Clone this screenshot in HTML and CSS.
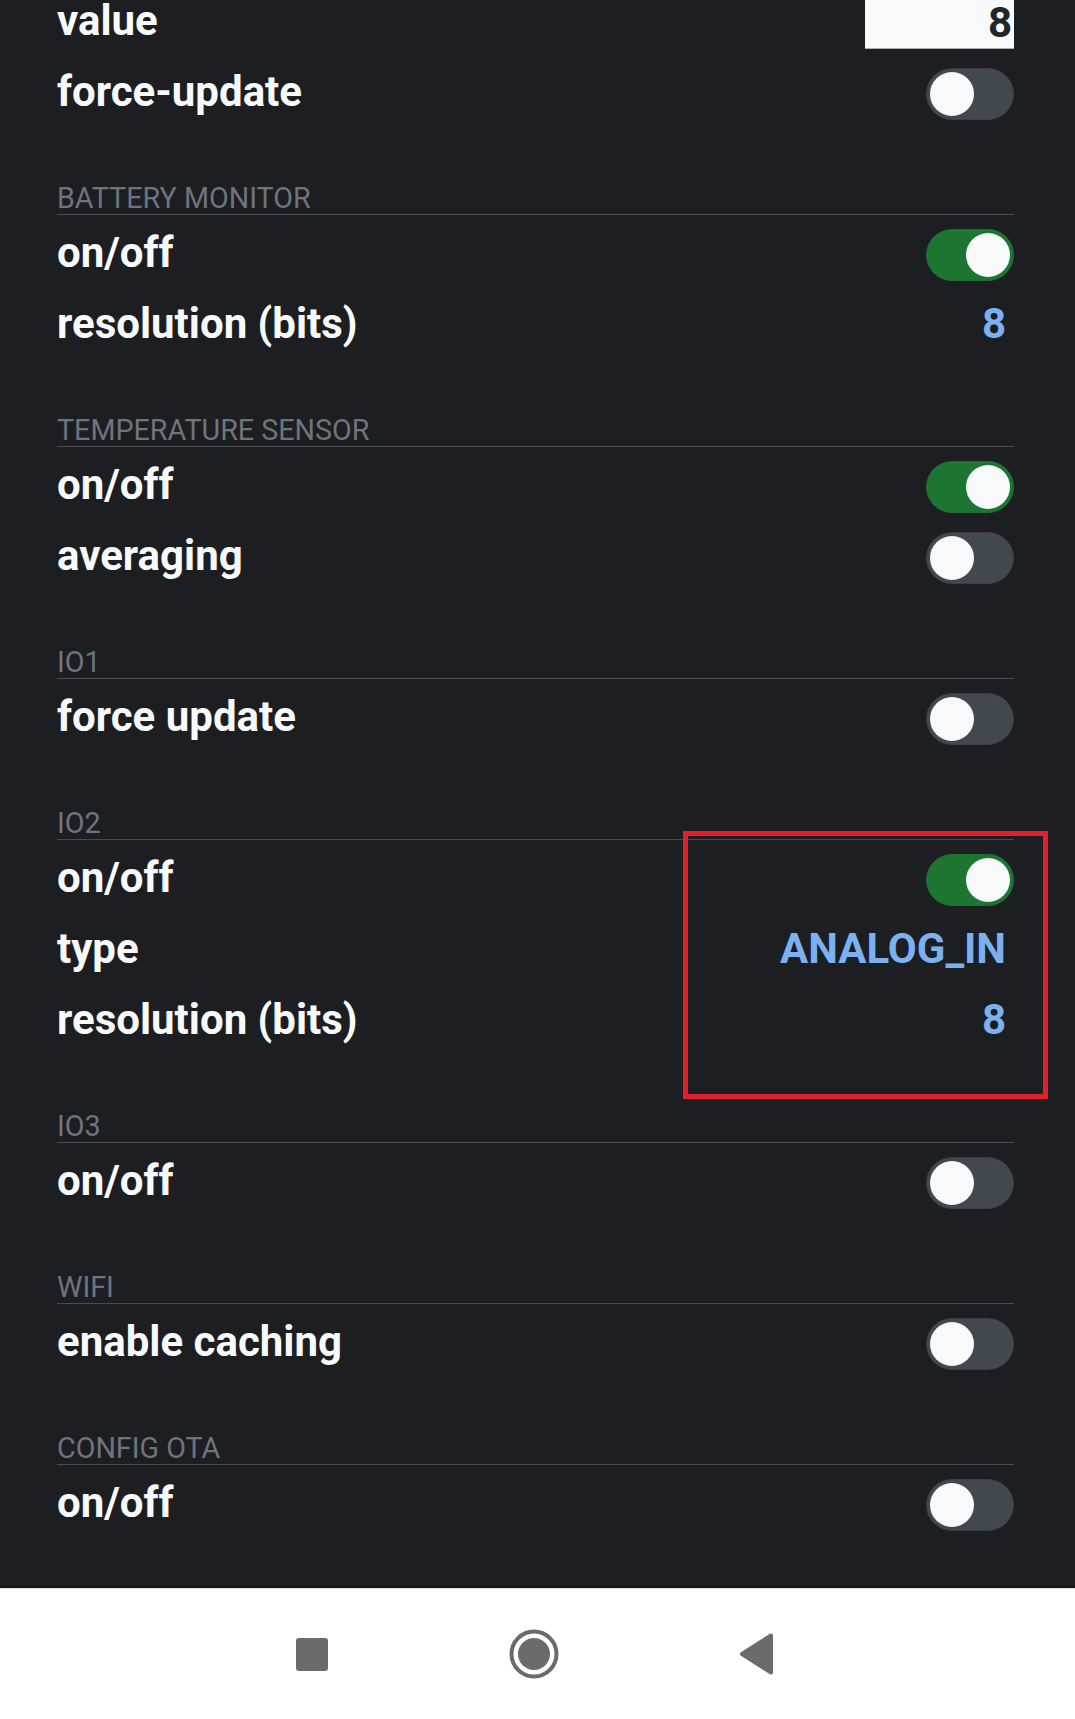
FILE: index.html
```html
<!DOCTYPE html>
<html lang="en">
<head>
  <meta charset="UTF-8" />
  <meta name="viewport" content="width=device-width, initial-scale=1" />
  <title>Device settings</title>
  <link rel="stylesheet" href="styles.css">
</head>
<body>
  <div class="screen">
    <div class="settings">
      <div class="group">
        <div class="row">
          <span class="label">value</span>
          <span class="field">8</span>
        </div>
        <div class="row">
          <span class="label">force-update</span>
          <span class="switch"><span class="knob"></span></span>
        </div>
      </div>

      <div class="section">
        <div class="section-title">BATTERY MONITOR</div>
        <div class="group">
          <div class="row">
            <span class="label">on/off</span>
            <span class="switch on"><span class="knob"></span></span>
          </div>
          <div class="row">
            <span class="label">resolution (bits)</span>
            <span class="value">8</span>
          </div>
        </div>
      </div>

      <div class="section">
        <div class="section-title">TEMPERATURE SENSOR</div>
        <div class="group">
          <div class="row">
            <span class="label">on/off</span>
            <span class="switch on"><span class="knob"></span></span>
          </div>
          <div class="row">
            <span class="label">averaging</span>
            <span class="switch"><span class="knob"></span></span>
          </div>
        </div>
      </div>

      <div class="section">
        <div class="section-title">IO1</div>
        <div class="group">
          <div class="row">
            <span class="label">force update</span>
            <span class="switch"><span class="knob"></span></span>
          </div>
        </div>
      </div>

      <div class="section">
        <div class="section-title">IO2</div>
        <div class="group">
          <div class="row">
            <span class="label">on/off</span>
            <span class="switch on"><span class="knob"></span></span>
          </div>
          <div class="row">
            <span class="label">type</span>
            <span class="value">ANALOG_IN</span>
          </div>
          <div class="row">
            <span class="label">resolution (bits)</span>
            <span class="value">8</span>
          </div>
        </div>
      </div>

      <div class="section">
        <div class="section-title">IO3</div>
        <div class="group">
          <div class="row">
            <span class="label">on/off</span>
            <span class="switch"><span class="knob"></span></span>
          </div>
        </div>
      </div>

      <div class="section">
        <div class="section-title">WIFI</div>
        <div class="group">
          <div class="row">
            <span class="label">enable caching</span>
            <span class="switch"><span class="knob"></span></span>
          </div>
        </div>
      </div>

      <div class="section">
        <div class="section-title">CONFIG OTA</div>
        <div class="group">
          <div class="row">
            <span class="label">on/off</span>
            <span class="switch"><span class="knob"></span></span>
          </div>
        </div>
      </div>
    </div>
  </div>

  <!-- annotation drawn over the IO2 values -->
  <div class="highlight"></div>

  <div class="navbar">
    <span class="nav-btn">
      <svg width="32" height="33" viewBox="0 0 32 33"><rect x="0" y="0" width="32" height="33" rx="3" fill="#6b6b6b"/></svg>
    </span>
    <span class="nav-btn">
      <svg width="50" height="50" viewBox="0 0 50 50"><circle cx="25" cy="25" r="22.5" fill="none" stroke="#6b6b6b" stroke-width="4"/><circle cx="25" cy="25" r="16" fill="#6b6b6b"/></svg>
    </span>
    <span class="nav-btn">
      <svg width="35" height="42" viewBox="0 0 35 42"><polygon points="32,2.5 32,39.5 3,21" fill="#6b6b6b" stroke="#6b6b6b" stroke-width="4" stroke-linejoin="round"/></svg>
    </span>
  </div>
</body>
</html>
```

FILE: styles.css
```css
html, body {
  margin: 0;
  height: 100%;
}
body {
  position: relative;
  display: flex;
  flex-direction: column;
  height: 1719px;
  background: #1c1e22;
  color: #f8f9fa;
  font-family: Roboto, "Noto Sans", sans-serif;
  overflow: hidden;
}
.screen {
  flex: 1;
  overflow: hidden;
}
/* list is scrolled a little, first row is cut at the top */
.settings {
  margin-top: -13px;
  padding: 0 61px 0 57px;
}
.section {
  padding-top: 54px;
}
.section-title {
  font-size: 28.7px;
  line-height: 31px;
  color: #6c757d;
  border-bottom: 1px solid #474c53;
}
.section .group {
  padding-top: 4px;
}
.row {
  display: flex;
  align-items: center;
  justify-content: space-between;
  height: 71px;
}
.label {
  font-size: 42px;
  font-weight: 700;
  line-height: 50px;
  padding-bottom: 3px;
  color: #f8f9fa;
}
.value {
  font-size: 42px;
  font-weight: 700;
  line-height: 50px;
  padding-bottom: 3px;
  color: #7cb1f0;
  padding-right: 8px;
}
.field {
  box-sizing: border-box;
  width: 149px;
  height: 52px;
  padding-right: 2px;
  background: #f8f9fa;
  border-bottom: 1px solid #a9afb5;
  color: #212529;
  font-size: 42px;
  font-weight: 700;
  line-height: 52px;
  text-align: right;
}
.switch {
  box-sizing: border-box;
  display: flex;
  align-items: center;
  justify-content: flex-start;
  width: 88px;
  height: 52px;
  padding: 0 3px;
  border-radius: 26px;
  background: #42484f;
  border: 1px solid #3a3f45;
}
.switch.on {
  justify-content: flex-end;
  background: #1d7532;
  border-color: #1f6e31;
}
.knob {
  width: 44px;
  height: 44px;
  border-radius: 50%;
  background: #f8f9fa;
}
.highlight {
  position: absolute;
  left: 683px;
  top: 831px;
  width: 365px;
  height: 268px;
  box-sizing: border-box;
  border: 5px solid #e0212b;
}
.navbar {
  box-sizing: border-box;
  display: flex;
  align-items: center;
  justify-content: center;
  gap: 162px;
  height: 131px;
  padding-right: 7px;
  background: #fff;
  border-top: 1px solid #dcdcdc;
  box-shadow: 0 -3px 0 #16181b;
}
.nav-btn {
  display: flex;
  align-items: center;
  justify-content: center;
  width: 60px;
  height: 60px;
}
```
